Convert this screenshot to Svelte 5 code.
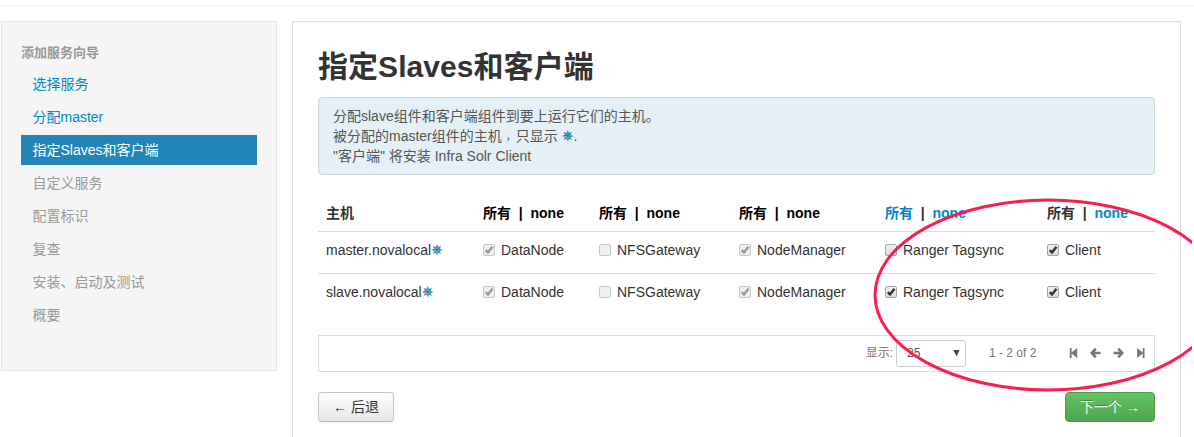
<script>
  const steps = [
    { label: '选择服务', state: 'done' },
    { label: '分配master', state: 'done' },
    { label: '指定Slaves和客户端', state: 'active' },
    { label: '自定义服务', state: '' },
    { label: '配置标识', state: '' },
    { label: '复查', state: '' },
    { label: '安装、启动及测试', state: '' },
    { label: '概要', state: '' }
  ];
  const columns = [
    { name: 'DataNode', all: 'off', none: 'off' },
    { name: 'NFSGateway', all: 'off', none: 'off' },
    { name: 'NodeManager', all: 'off', none: 'off' },
    { name: 'Ranger Tagsync', all: 'link', none: 'link' },
    { name: 'Client', all: 'plain', none: 'link' }
  ];
  const hosts = [
    { name: 'master.novalocal', checks: [true, false, true, false, true] },
    { name: 'slave.novalocal', checks: [true, false, true, true, true] }
  ];
</script>

{#snippet checkbox(checked, disabled)}
  <svg class="check" class:disabled width="13" height="13" viewBox="0 0 13 13">
    <defs>
      <linearGradient id="face" x1="0" y1="0" x2="0" y2="1">
        <stop offset="0" stop-color="#f0f0f0" />
        <stop offset="1" stop-color="#dcdcdc" />
      </linearGradient>
    </defs>
    <rect class="box" x=".5" y=".5" width="11" height="11" rx="1.5" />
    {#if checked}
      <path class="tick" d="M2.8 6.2 L5 8.5 L9.5 2.8" />
    {/if}
  </svg>
{/snippet}

<div class="page">
  <div class="topline"></div>
  <div class="columns">
    <aside>
      <div class="nav-title">添加服务向导</div>
      <ul>
        {#each steps as s}
          <li class={s.state}>{s.label}</li>
        {/each}
      </ul>
    </aside>

    <main>
      <h2>指定Slaves和客户端</h2>
      <div class="alert">
        <div>分配slave组件和客户端组件到要上运行它们的主机。</div>
        <div>被分配的master组件的主机<span class="comma">，</span>只显示 <i class="star">✵</i>.</div>
        <div>"客户端" 将安装 Infra Solr Client</div>
      </div>

      <div class="table">
        <div class="row head">
          <div>主机</div>
          {#each columns as c}
            <div><span class={c.all}>所有</span>&nbsp;&nbsp;<span class={c.all === 'off' ? 'off' : ''}>|</span>&nbsp;&nbsp;<span class={c.none}>none</span></div>
          {/each}
        </div>
        {#each hosts as h}
          <div class="row">
            <div>{h.name}<i class="star">✵</i></div>
            {#each columns as c, i}
              <div class="cell">{@render checkbox(h.checks[i], i < 3)}<span>{c.name}</span></div>
            {/each}
          </div>
        {/each}
      </div>

      <div class="pager">
        <span class="show">显示:</span>
        <div class="select"><span>25</span><svg width="7" height="7" viewBox="0 0 7 7"><path d="M.3 0H6.7L3.5 6.3Z" fill="#444" /></svg></div>
        <span class="range">1 - 2 of 2</span>
        <div class="icons">
          <svg width="9" height="10" viewBox="0 0 9 10"><path d="M.8 0H2.6V4.4L8.2 0V10L2.6 5.6V10H.8Z" /></svg>
          <svg width="11" height="10" viewBox="0 0 11 10"><path d="M5.8 .7 1.7 5 5.8 9.3M2 5H10.5" class="arrow" /></svg>
          <svg width="11" height="10" viewBox="0 0 11 10"><path d="M5.2 .7 9.3 5 5.2 9.3M9 5H.5" class="arrow" /></svg>
          <svg width="9" height="10" viewBox="0 0 9 10"><path d="M8.5 0H6.7V4.4L1.1 0V10L6.7 5.6V10H8.5Z" /></svg>
        </div>
      </div>

      <div class="actions">
        <button class="back">← 后退</button>
        <button class="next">下一个 →</button>
      </div>
    </main>
  </div>

  <svg class="annotation" width="1192" height="437" viewBox="0 0 1192 437">
    <ellipse cx="1048" cy="295" rx="173" ry="95" />
  </svg>
</div>

<style>
  :global(body) { margin: 0; background: #fff; overflow: hidden; }
  .page {
    position: relative;
    display: flow-root;
    height: 437px;
    overflow: hidden;
    font: 14px/20px "Liberation Sans", "Noto Sans CJK SC", sans-serif;
    color: #333;
  }
  .topline { height: 1px; margin-top: 5px; background: #eee; }
  .columns { display: flex; align-items: flex-start; gap: 15px; padding: 15px 0 0 1px; }
  aside {
    box-sizing: border-box;
    width: 276px;
    height: 350px;
    padding: 21px 19px;
    background: #f5f5f5;
    border: 1px solid #e3e3e3;
  }
  .nav-title { font-size: 13px; font-weight: bold; color: #999; line-height: 20px; }
  ul { list-style: none; margin: 6px 0 0; padding: 0; display: flex; flex-direction: column; gap: 3px; }
  li { height: 30px; line-height: 30px; padding-left: 11.5px; color: #999; }
  li.done { color: #0088cc; }
  li.active { background: #2186b6; color: #fff; }
  main {
    box-sizing: border-box;
    width: 889px;
    height: 440px;
    padding: 25px 25px 0;
    border: 1px solid #ddd;
  }
  h2 { margin: 0; font-size: 30px; line-height: 40px; font-weight: bold; letter-spacing: .06px; }
  .alert {
    margin-top: 10px;
    padding: 8px 14px;
    height: 60px;
    border: 1px solid #cdd9dd;
    border-radius: 4px;
    background: #e4f0f5;
    color: #555;
  }
  .alert div { height: 20px; }
  .comma {
    display: inline-block;
    box-sizing: border-box;
    width: 14px;
    height: 20px;
    padding-left: 4px;
    font-size: 10px;
    line-height: 22px;
    vertical-align: top;
  }
  .star { font: 14px/10px "DejaVu Sans"; color: #1e7fa5; -webkit-text-stroke: .2px #1e7fa5; }
  .table { margin-top: 20px; }
  .row {
    display: grid;
    grid-template-columns: 157px 116px 140px 146px 162px 1fr;
    padding: 8px 0 13px 8px;
    border-top: 1px solid #ddd;
    height: 20px;
  }
  .head { border: 0; padding: 8px 0 8px 8px; font-weight: bold; }
  .off { color: #000; }
  .link { color: #0088cc; }
  .cell { display: flex; align-items: flex-start; gap: 5px; }
  .check { margin-top: 4px; }
  .box { fill: url(#face); stroke: #a5a5a5; }
  .tick { fill: none; stroke: #333; stroke-width: 2.4; }
  .disabled .box { stroke: #c8c8c8; fill: #efefef; }
  .disabled .tick { stroke: #999; }
  .pager {
    box-sizing: border-box;
    height: 37px;
    margin-top: 20px;
    padding-right: 9px;
    border: 1px solid #ddd;
    display: flex;
    align-items: center;
    justify-content: flex-end;
    font-size: 12px;
    color: #777;
  }
  .show { padding-bottom: 1px; }
  .select {
    box-sizing: border-box;
    display: flex;
    align-items: center;
    justify-content: space-between;
    width: 70px;
    height: 27px;
    margin: 0 23px 0 3px;
    padding: 0 5px 1px 10px;
    border: 1px solid #ccc;
    border-radius: 3px;
    color: #555;
  }
  .range { width: 80px; padding-bottom: 2px; }
  .icons { display: flex; align-items: center; gap: 12px; fill: #777; padding-bottom: 2px; }
  .arrow { fill: none; stroke: #777; stroke-width: 2.6; }
  .actions { display: flex; justify-content: space-between; margin-top: 20px; }
  button {
    box-sizing: border-box;
    height: 30px;
    padding: 0 14px;
    font: inherit;
    border-radius: 4px;
  }
  .back {
    width: 76px;
    color: #333;
    border: 1px solid #c5c5c5;
    border-bottom-color: #b3b3b3;
    background: linear-gradient(#fff, #e6e6e6);
    box-shadow: 0 1px 2px rgba(0, 0, 0, .05);
  }
  .next {
    width: 90px;
    color: #fff;
    border: 1px solid #4a9c4a;
    background: linear-gradient(#62c462, #51a351);
    text-shadow: 0 -1px 0 rgba(0, 0, 0, .25);
  }
  .annotation { position: absolute; left: 0; top: 0; pointer-events: none; }
  ellipse { fill: none; stroke: #fb1d4d; stroke-width: 3; }
</style>
